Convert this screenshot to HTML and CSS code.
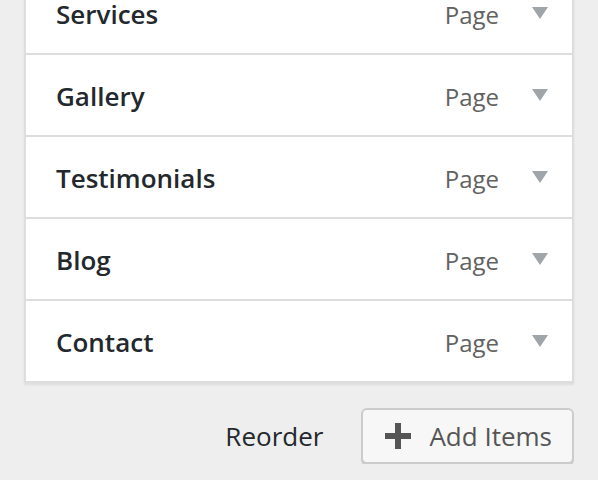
FILE: index.html
```html
<!DOCTYPE html>
<html lang="en">
<head>
    <meta charset="UTF-8">
    <meta name="viewport" content="width=device-width, initial-scale=1.0">
    <title>Menu Items</title>
    <link rel="stylesheet" href="styles.css">
</head>
<body>
    <!-- Menu item list -->
    <ul class="menu-items">
        <li class="menu-item"><span class="item-title">Services</span><span class="item-type">Page</span><span class="item-toggle"></span></li>
        <li class="menu-item"><span class="item-title">Gallery</span><span class="item-type">Page</span><span class="item-toggle"></span></li>
        <li class="menu-item"><span class="item-title">Testimonials</span><span class="item-type">Page</span><span class="item-toggle"></span></li>
        <li class="menu-item"><span class="item-title">Blog</span><span class="item-type">Page</span><span class="item-toggle"></span></li>
        <li class="menu-item"><span class="item-title">Contact</span><span class="item-type">Page</span><span class="item-toggle"></span></li>
    </ul>

    <!-- Actions -->
    <div class="menu-actions">
        <button class="reorder-btn">Reorder</button>
        <button class="add-btn">
            <svg class="plus-icon" width="26" height="26" viewBox="0 0 26 26">
                <rect x="10" y="0" width="6" height="26" fill="#555"/>
                <rect x="0" y="10" width="26" height="6" fill="#555"/>
            </svg>
            Add Items
        </button>
    </div>
</body>
</html>
```

FILE: styles.css
```css
* {
    margin: 0;
    padding: 0;
    box-sizing: border-box;
}

body {
    background: #eee;
    font-family: "Open Sans", "Noto Sans", sans-serif;
    color: #23282d;
}

/* Menu item list */
.menu-items {
    list-style: none;
    width: 550px;
    margin: -27px 0 0 24px;
    border: 2px solid #ddd;
    border-top: none;
    background: #fff;
    box-shadow: 0 2px 2px rgba(0, 0, 0, 0.07);
}

.menu-item {
    display: flex;
    align-items: center;
    height: 82px;
    padding: 2px 24px 0 30px;
    border-bottom: 2px solid #ddd;
}

.menu-item:last-child {
    height: 80px;
    border-bottom: none;
}

.item-title {
    flex: 1;
    font-size: 26px;
    font-weight: 600;
}

.item-type {
    font-size: 24px;
    color: #626262;
    margin-right: 33px;
}

/* Dropdown arrow */
.item-toggle {
    width: 0;
    height: 0;
    border-left: 8px solid transparent;
    border-right: 8px solid transparent;
    border-top: 12px solid #a0a5aa;
    margin-top: -3px;
}

/* Bottom actions */
.menu-actions {
    display: flex;
    justify-content: flex-end;
    align-items: center;
    gap: 38px;
    width: 550px;
    margin: 25px 0 0 24px;
}

button {
    font-family: "Open Sans", "Noto Sans", sans-serif;
    font-size: 26px;
    cursor: pointer;
}

.reorder-btn {
    background: none;
    border: none;
    color: #23282d;
}

.add-btn {
    display: flex;
    align-items: center;
    gap: 18px;
    height: 56px;
    padding: 0 20px 0 22px;
    background: #f7f7f7;
    color: #555;
    border: 2px solid #ccc;
    border-radius: 6px;
    box-shadow: 0 2px 0 #ccc;
}
```
